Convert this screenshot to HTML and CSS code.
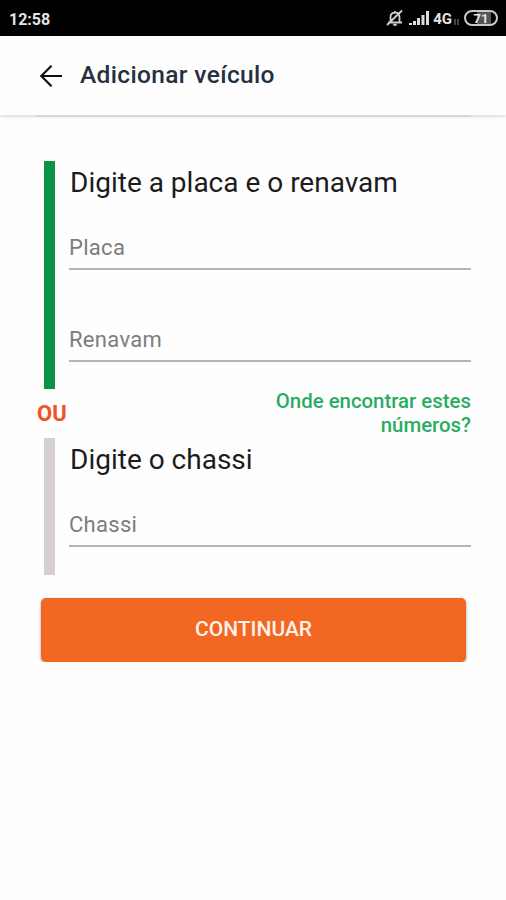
FILE: index.html
```html
<!DOCTYPE html>
<html lang="pt-br">
  <head>
    <meta charset="UTF-8" />
    <meta name="viewport" content="width=device-width, initial-scale=1.0" />
    <title>Adicionar veículo</title>
    <link rel="stylesheet" href="styles.css">
  </head>
  <body>
    <div class="status-bar">
      <span class="hora">12:58</span>
      <div class="status-icons">
        <svg class="sino" width="18" height="18" viewBox="0 0 18 18">
          <path d="M2 13.500h14M4.500 13V8.200C4.500 5.400 6.300 3.600 9 3.600s4.500 1.800 4.500 4.600V13M9 3.500V2M7.500 15.200c.6 1 2.400 1 3 0M1 16L16 1.500" />
        </svg>
        <svg class="sinal" width="21" height="16" viewBox="0 0 21 16">
          <path d="M0 15v-2h3v2zM4 15v-4h3v4zM8 15V8h3v7zM12.500 15V5h3v10zM17 15V1h3v14z" />
        </svg>
        <span class="rede">4G</span>
        <svg class="sinal fraco" width="5" height="8" viewBox="0 0 5 8">
          <path d="M0 1h2v6H0zM3 1h2v6H3z" />
        </svg>
        <span class="bateria">71</span>
      </div>
    </div>

    <header class="topo">
      <svg class="voltar" width="24" height="24" viewBox="0 0 24 24">
        <path d="M23 12H2.500M12.500 1.800L2.300 12l10.200 10.200" />
      </svg>
      <h1>Adicionar veículo</h1>
    </header>

    <form class="formulario">
      <div class="barra verde"></div>
      <div class="grupo">
        <h2>Digite a placa e o renavam</h2>
        <input type="text" class="placa" placeholder="Placa" />
        <input type="text" class="renavam" placeholder="Renavam" />
      </div>

      <span class="ou">OU</span>
      <a class="ajuda">Onde encontrar estes<br />números?</a>

      <div class="barra"></div>
      <div class="grupo">
        <h2>Digite o chassi</h2>
        <input type="text" class="chassi" placeholder="Chassi" />
      </div>

      <button type="button">CONTINUAR</button>
    </form>
  </body>
</html>
```
FILE: styles.css
```css
* {
  box-sizing: border-box;
}

body {
  font-family: Roboto, sans-serif;
  background-color: #fefefe;
  margin: 0;
}

.status-bar {
  display: flex;
  justify-content: space-between;
  align-items: center;
  height: 36px;
  padding: 0 8px 0 9px;
  background-color: #000;
  color: #e4e4e4;
}

.hora {
  font-size: 16px;
  font-weight: bold;
  padding-top: 2px;
}

.status-icons {
  display: flex;
  align-items: center;
}

.sino {
  fill: none;
  stroke: #d0d0d0;
  stroke-width: 1.8;
  margin-right: 5px;
}

.sinal {
  fill: #dcdcdc;
}

.fraco {
  fill: #444;
  margin: 7px 5px 0 2px;
}

.rede {
  font-size: 15px;
  font-weight: bold;
  margin: 2px 0 0 3px;
}

.bateria {
  width: 34px;
  height: 16px;
  border: 2px solid #c8c8c8;
  border-radius: 8px;
  background: linear-gradient(to right, #000 35%, #555 35%, #555 85%, #000 85%);
  font-size: 13px;
  font-weight: bold;
  line-height: 13px;
  text-align: center;
}

.topo {
  display: flex;
  align-items: center;
  height: 79px;
  padding: 0 0 2px 39px;
  box-shadow: 0 2px 3px rgba(0, 0, 0, 0.13);
}

.voltar {
  fill: none;
  stroke: #111;
  stroke-width: 2.2;
  margin: 3px 17px 0 0;
}

.topo h1 {
  margin: 0;
  font-size: 24.5px;
  font-weight: 500;
  letter-spacing: 0.35px;
  color: #253040;
}

.formulario {
  display: grid;
  grid-template-columns: 33px 402px;
  grid-template-rows: 228px 49px 137px 87px;
  margin: 0 35px 0 36px;
  padding-top: 44px;
  border-top: 2px solid #d6d6d6;
}

.barra {
  width: 11px;
  margin-left: 8px;
  background-color: #d5cfcf;
}

.verde {
  background-color: #0c9244;
}

h2 {
  margin: 0;
  padding-left: 1px;
  font-size: 28px;
  font-weight: normal;
  line-height: 44px;
  color: #1c1c1c;
}

input {
  display: block;
  width: 100%;
  height: 44px;
  padding: 0;
  border: none;
  border-bottom: 2px solid #b4b4b4;
  background: none;
  font-family: inherit;
  font-size: 22px;
  letter-spacing: 0.3px;
}

input::placeholder {
  color: #7d7d7d;
}

.placa {
  margin-top: 21px;
}

.renavam {
  margin-top: 48px;
}

.chassi {
  margin-top: 21px;
}

.ou {
  align-self: center;
  padding-left: 1px;
  font-size: 22px;
  font-weight: bold;
  color: #f4511e;
}

.ajuda {
  font-size: 20.4px;
  font-weight: 500;
  line-height: 24px;
  text-align: right;
  color: #2bac63;
}

button {
  grid-column: 1 / 3;
  margin: 23px 5px 0;
  padding: 0 0 2px;
  border: none;
  border-radius: 5px;
  background-color: #f26722;
  color: #fff3ec;
  font-family: inherit;
  font-size: 21px;
  font-weight: 500;
  box-shadow: 0 1px 3px rgba(0, 0, 0, 0.4);
}
```
